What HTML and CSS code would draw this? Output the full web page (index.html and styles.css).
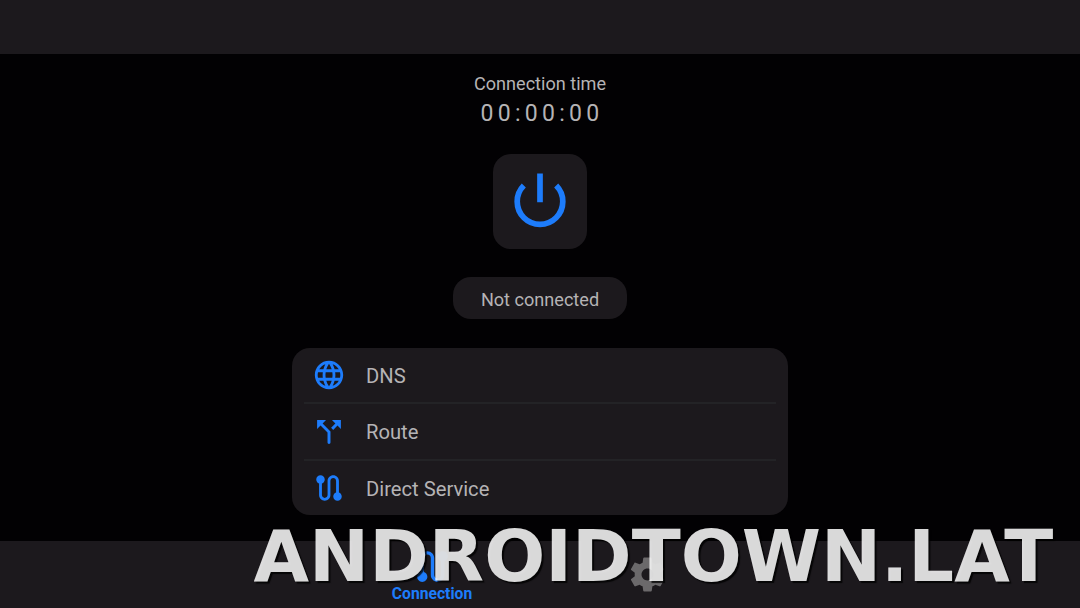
FILE: index.html
```html
<!DOCTYPE html>
<html lang="en">

<head>
    <meta charset="UTF-8">
    <meta name="viewport" content="width=device-width, initial-scale=1.0">
    <title>Connection</title>
    <link rel="stylesheet" href="styles.css">
</head>

<body>
    <header class="topbar"></header>

    <main class="content">
        <div class="time-label">Connection time</div>
        <div class="timer">00:00:00</div>

        <button class="power" aria-label="Connect">
            <svg width="54" height="56" viewBox="0 0 54 56">
                <path d="M10.8 12.5A22.8 22.8 0 1 0 43.2 12.5M27 .5V29.3" fill="none" stroke="currentColor" stroke-width="5.7"/>
            </svg>
        </button>

        <div class="status">Not connected</div>

        <div class="menu">
            <a class="menu-item">
                <svg class="icon" viewBox="0 0 24 24"><path d="M11.99 2C6.47 2 2 6.48 2 12s4.47 10 9.99 10C17.52 22 22 17.52 22 12S17.52 2 11.99 2zm6.93 6h-2.95c-.32-1.25-.78-2.45-1.38-3.56 1.84.63 3.37 1.91 4.33 3.56zM12 4.04c.83 1.2 1.48 2.53 1.91 3.96h-3.82c.43-1.43 1.08-2.76 1.91-3.96zM4.26 14C4.1 13.36 4 12.69 4 12s.1-1.36.26-2h3.38c-.08.66-.14 1.32-.14 2s.06 1.34.14 2H4.26zm.82 2h2.95c.32 1.25.78 2.45 1.38 3.56-1.84-.63-3.37-1.9-4.33-3.56zm2.95-8H5.08c.96-1.66 2.49-2.93 4.33-3.56C8.81 5.55 8.35 6.75 8.03 8zM12 19.96c-.83-1.2-1.48-2.53-1.91-3.96h3.82c-.43 1.43-1.08 2.76-1.91 3.96zM14.34 14H9.66c-.09-.66-.16-1.32-.16-2s.07-1.35.16-2h4.68c.09.65.16 1.32.16 2s-.07 1.34-.16 2zm.25 5.56c.6-1.11 1.06-2.31 1.38-3.56h2.95c-.96 1.65-2.49 2.93-4.33 3.56zM16.36 14c.08-.66.14-1.32.14-2s-.06-1.34-.14-2h3.38c.16.64.26 1.31.26 2s-.1 1.36-.26 2h-3.38z"/></svg>
                <span>DNS</span>
            </a>
            <a class="menu-item">
                <svg class="icon icon-split" viewBox="0 0 24 24"><path d="M14 4l2.29 2.29-2.88 2.88 1.42 1.42 2.88-2.88L20 10V4zm-4 0H4v6l2.29-2.29 4.71 4.7V19a1 1 0 0 0 2 0v-7.41l-5.29-5.3z"/></svg>
                <span>Route</span>
            </a>
            <a class="menu-item">
                <svg class="icon" viewBox="0 0 24 24"><path d="M19 15.18V7c0-2.21-1.79-4-4-4s-4 1.79-4 4v10c0 1.1-.9 2-2 2s-2-.9-2-2V8.82C8.16 8.4 9 7.3 9 6c0-1.66-1.34-3-3-3S3 4.34 3 6c0 1.3.84 2.4 2 2.82V17c0 2.21 1.79 4 4 4s4-1.79 4-4V7c0-1.1.9-2 2-2s2 .9 2 2v8.18c-1.16.41-2 1.51-2 2.82 0 1.66 1.34 3 3 3s3-1.34 3-3c0-1.3-.84-2.4-2-2.82z"/></svg>
                <span>Direct Service</span>
            </a>
        </div>
    </main>

    <nav class="bottombar">
        <a class="tab active">
            <svg class="tab-icon flip" viewBox="0 0 24 24"><path d="M19 15.18V7c0-2.21-1.79-4-4-4s-4 1.79-4 4v10c0 1.1-.9 2-2 2s-2-.9-2-2V8.82C8.16 8.4 9 7.3 9 6c0-1.66-1.34-3-3-3S3 4.34 3 6c0 1.3.84 2.4 2 2.82V17c0 2.21 1.79 4 4 4s4-1.79 4-4V7c0-1.1.9-2 2-2s2 .9 2 2v8.18c-1.16.41-2 1.51-2 2.82 0 1.66 1.34 3 3 3s3-1.34 3-3c0-1.3-.84-2.4-2-2.82z"/></svg>
            <span>Connection</span>
        </a>
        <a class="tab" aria-label="Settings">
            <svg class="tab-icon" viewBox="0 0 24 24"><path d="M19.43 12.98c.04-.32.07-.64.07-.98s-.03-.66-.07-.98l2.11-1.65c.19-.15.24-.42.12-.64l-2-3.46c-.12-.22-.39-.3-.61-.22l-2.49 1c-.52-.4-1.08-.73-1.69-.98l-.38-2.65C14.46 2.18 14.25 2 14 2h-4c-.25 0-.46.18-.49.42l-.38 2.65c-.61.25-1.17.59-1.69.98l-2.49-1c-.23-.09-.49 0-.61.22l-2 3.46c-.13.22-.07.49.12.64l2.11 1.65c-.04.32-.07.65-.07.98s.03.66.07.98l-2.11 1.65c-.19.15-.24.42-.12.64l2 3.46c.12.22.39.3.61.22l2.49-1c.52.4 1.08.73 1.69.98l.38 2.65c.03.24.24.42.49.42h4c.25 0 .46-.18.49-.42l.38-2.65c.61-.25 1.17-.59 1.69-.98l2.49 1c.23.09.49 0 .61-.22l2-3.46c.12-.22.07-.49-.12-.64l-2.11-1.65zM12 15.5c-1.93 0-3.5-1.57-3.5-3.5s1.57-3.5 3.5-3.5 3.5 1.57 3.5 3.5-1.57 3.5-3.5 3.5z"/></svg>
        </a>
    </nav>

    <div class="watermark">ANDROIDTOWN.LAT</div>
</body>

</html>
```

FILE: styles.css
```css
* {
    box-sizing: border-box;
}

body {
    font-family: Roboto, sans-serif;
    background-color: #020103;
    color: #b5b3b5;
    margin: 0;
    height: 608px;
    overflow: hidden;
    display: flex;
    flex-direction: column;
}

.topbar {
    height: 54px;
    flex-shrink: 0;
    background-color: #1c191d;
}

.content {
    flex: 1;
    display: flex;
    flex-direction: column;
    align-items: center;
    padding-top: 18px;
}

.time-label {
    font-size: 18.1px;
    line-height: 24px;
}

.timer {
    font-size: 23px;
    line-height: 29px;
    letter-spacing: 4.3px;
    margin: 3px 0 26.4px 4px;
}

.power {
    width: 94px;
    height: 94.6px;
    padding: 0;
    border: 0;
    border-radius: 18px;
    background-color: #1c191d;
    color: #1d7cfb;
    display: flex;
    align-items: center;
    justify-content: center;
}

.power svg {
    margin-bottom: 2px;
}

.status {
    width: 174px;
    height: 42px;
    margin: 28.4px 0;
    border-radius: 18px;
    background-color: #1c191d;
    font-size: 18.1px;
    line-height: 45px;
    text-align: center;
}

.menu {
    width: 496px;
    height: 167.2px;
    padding: 0 12px;
    border-radius: 18px;
    background-color: #1c191d;
}

.menu-item {
    display: flex;
    align-items: center;
    gap: 20px;
    height: 56.6px;
    padding-left: 8px;
    font-size: 20.2px;
}

.menu-item:first-child {
    height: 54.6px;
}

.menu-item + .menu-item {
    border-top: 2px solid #232326;
}

.menu-item span {
    padding-top: 1px;
}

.icon {
    width: 34px;
    height: 34px;
    fill: #1d7cfb;
}

.icon-split {
    transform: scale(1.05);
}

.bottombar {
    height: 67.4px;
    flex-shrink: 0;
    display: flex;
    justify-content: center;
    background-color: #1c191d;
}

.tab {
    width: 216px;
    display: flex;
    flex-direction: column;
    align-items: center;
    padding-top: 5px;
    color: #6b696b;
    font-size: 15.7px;
    font-weight: bold;
    line-height: 14px;
}

.tab:last-child {
    justify-content: center;
    padding: 0 1px 0 0;
}

.tab.active {
    color: #1d7cfb;
}

.tab-icon {
    width: 41px;
    height: 41px;
    fill: currentColor;
}

.flip {
    transform: scaleX(-1);
}

.watermark {
    position: absolute;
    left: 253.5px;
    top: 514px;
    font: bold 71.85px/84px "DejaVu Sans", sans-serif;
    color: rgba(255, 255, 255, .85);
    text-shadow: 2px 2px 1px rgba(0, 0, 0, .8);
    white-space: nowrap;
}
```
